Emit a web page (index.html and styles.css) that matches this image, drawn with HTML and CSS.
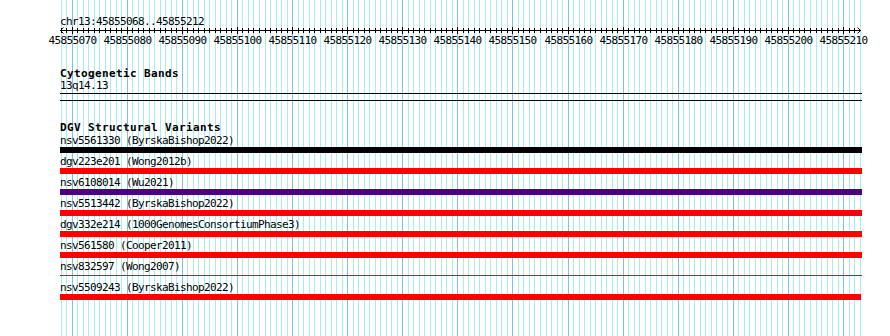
FILE: index.html
```html
<!DOCTYPE html>
<html>
<head>
<meta charset="utf-8">
<title>chr13:45855068..45855212</title>
<link rel="stylesheet" href="styles.css">
</head>
<body>
<div class="view">
  <div class="panel">
    <svg class="grid" width="802" height="336" viewBox="0 0 802 336">
      <path class="minor" d="M1.5 0v336M6.5 0v336M17.5 0v336M23.5 0v336M28.5 0v336M34.5 0v336M39.5 0v336M45.5 0v336M50.5 0v336M56.5 0v336M61.5 0v336M72.5 0v336M78.5 0v336M83.5 0v336M89.5 0v336M94.5 0v336M100.5 0v336M105.5 0v336M111.5 0v336M116.5 0v336M127.5 0v336M133.5 0v336M138.5 0v336M144.5 0v336M149.5 0v336M155.5 0v336M160.5 0v336M166.5 0v336M171.5 0v336M182.5 0v336M188.5 0v336M193.5 0v336M199.5 0v336M205.5 0v336M210.5 0v336M216.5 0v336M221.5 0v336M227.5 0v336M238.5 0v336M243.5 0v336M249.5 0v336M254.5 0v336M260.5 0v336M265.5 0v336M271.5 0v336M276.5 0v336M282.5 0v336M293.5 0v336M298.5 0v336M304.5 0v336M309.5 0v336M315.5 0v336M320.5 0v336M326.5 0v336M331.5 0v336M337.5 0v336M348.5 0v336M353.5 0v336M359.5 0v336M364.5 0v336M370.5 0v336M375.5 0v336M381.5 0v336M386.5 0v336M392.5 0v336M403.5 0v336M408.5 0v336M414.5 0v336M419.5 0v336M425.5 0v336M430.5 0v336M436.5 0v336M441.5 0v336M447.5 0v336M458.5 0v336M463.5 0v336M469.5 0v336M474.5 0v336M480.5 0v336M486.5 0v336M491.5 0v336M497.5 0v336M502.5 0v336M513.5 0v336M519.5 0v336M524.5 0v336M530.5 0v336M535.5 0v336M541.5 0v336M546.5 0v336M552.5 0v336M557.5 0v336M568.5 0v336M574.5 0v336M579.5 0v336M585.5 0v336M590.5 0v336M596.5 0v336M601.5 0v336M607.5 0v336M612.5 0v336M623.5 0v336M629.5 0v336M634.5 0v336M640.5 0v336M645.5 0v336M651.5 0v336M656.5 0v336M662.5 0v336M667.5 0v336M678.5 0v336M684.5 0v336M689.5 0v336M695.5 0v336M700.5 0v336M706.5 0v336M711.5 0v336M717.5 0v336M722.5 0v336M733.5 0v336M739.5 0v336M744.5 0v336M750.5 0v336M756.5 0v336M761.5 0v336M767.5 0v336M772.5 0v336M778.5 0v336M789.5 0v336M794.5 0v336M800.5 0v336"/>
      <path class="major" d="M12.5 0v336M67.5 0v336M122.5 0v336M177.5 0v336M232.5 0v336M287.5 0v336M342.5 0v336M397.5 0v336M452.5 0v336M508.5 0v336M563.5 0v336M618.5 0v336M673.5 0v336M728.5 0v336M783.5 0v336"/>
    </svg>
    <div class="tracks">
      <div class="pos">chr13:45855068..45855212</div>
      <svg class="ruler" width="802" height="22" viewBox="0 0 802 22">
        <path class="axis" d="M0 4.5H801"/>
        <path class="arrow" d="M3.5 1.5L0.5 4.5L3.5 7.5M797.5 1.5L800.5 4.5L797.5 7.5"/>
        <path class="tick" d="M1.5 2v5M6.5 2v5M17.5 2v5M23.5 2v5M28.5 2v5M34.5 2v5M39.5 2v5M45.5 2v5M50.5 2v5M56.5 2v5M61.5 2v5M72.5 2v5M78.5 2v5M83.5 2v5M89.5 2v5M94.5 2v5M100.5 2v5M105.5 2v5M111.5 2v5M116.5 2v5M127.5 2v5M133.5 2v5M138.5 2v5M144.5 2v5M149.5 2v5M155.5 2v5M160.5 2v5M166.5 2v5M171.5 2v5M182.5 2v5M188.5 2v5M193.5 2v5M199.5 2v5M205.5 2v5M210.5 2v5M216.5 2v5M221.5 2v5M227.5 2v5M238.5 2v5M243.5 2v5M249.5 2v5M254.5 2v5M260.5 2v5M265.5 2v5M271.5 2v5M276.5 2v5M282.5 2v5M293.5 2v5M298.5 2v5M304.5 2v5M309.5 2v5M315.5 2v5M320.5 2v5M326.5 2v5M331.5 2v5M337.5 2v5M348.5 2v5M353.5 2v5M359.5 2v5M364.5 2v5M370.5 2v5M375.5 2v5M381.5 2v5M386.5 2v5M392.5 2v5M403.5 2v5M408.5 2v5M414.5 2v5M419.5 2v5M425.5 2v5M430.5 2v5M436.5 2v5M441.5 2v5M447.5 2v5M458.5 2v5M463.5 2v5M469.5 2v5M474.5 2v5M480.5 2v5M486.5 2v5M491.5 2v5M497.5 2v5M502.5 2v5M513.5 2v5M519.5 2v5M524.5 2v5M530.5 2v5M535.5 2v5M541.5 2v5M546.5 2v5M552.5 2v5M557.5 2v5M568.5 2v5M574.5 2v5M579.5 2v5M585.5 2v5M590.5 2v5M596.5 2v5M601.5 2v5M607.5 2v5M612.5 2v5M623.5 2v5M629.5 2v5M634.5 2v5M640.5 2v5M645.5 2v5M651.5 2v5M656.5 2v5M662.5 2v5M667.5 2v5M678.5 2v5M684.5 2v5M689.5 2v5M695.5 2v5M700.5 2v5M706.5 2v5M711.5 2v5M717.5 2v5M722.5 2v5M733.5 2v5M739.5 2v5M744.5 2v5M750.5 2v5M756.5 2v5M761.5 2v5M767.5 2v5M772.5 2v5M778.5 2v5M789.5 2v5M794.5 2v5"/>
        <path class="tick" d="M12.5 1v7M67.5 1v7M122.5 1v7M177.5 1v7M232.5 1v7M287.5 1v7M342.5 1v7M397.5 1v7M452.5 1v7M508.5 1v7M563.5 1v7M618.5 1v7M673.5 1v7M728.5 1v7M783.5 1v7"/>
        <g class="scale">
          <text x="12.5" y="18">45855070</text>
          <text x="67.5" y="18">45855080</text>
          <text x="122.5" y="18">45855090</text>
          <text x="177.5" y="18">45855100</text>
          <text x="232.5" y="18">45855110</text>
          <text x="287.5" y="18">45855120</text>
          <text x="342.5" y="18">45855130</text>
          <text x="397.5" y="18">45855140</text>
          <text x="452.5" y="18">45855150</text>
          <text x="508.5" y="18">45855160</text>
          <text x="563.5" y="18">45855170</text>
          <text x="618.5" y="18">45855180</text>
          <text x="673.5" y="18">45855190</text>
          <text x="728.5" y="18">45855200</text>
          <text x="783.5" y="18">45855210</text>
        </g>
      </svg>

      <section class="track cyto">
        <div class="title">Cytogenetic Bands</div>
        <div class="label">13q14.13</div>
        <div class="band"></div>
      </section>

      <section class="track dgv">
        <div class="title">DGV Structural Variants</div>
        <div class="feature">
          <div class="label">nsv5561330 (ByrskaBishop2022)</div>
          <div class="bar black"></div>
        </div>
        <div class="feature">
          <div class="label">dgv223e201 (Wong2012b)</div>
          <div class="bar red"></div>
        </div>
        <div class="feature">
          <div class="label">nsv6108014 (Wu2021)</div>
          <div class="bar indigo"></div>
        </div>
        <div class="feature">
          <div class="label">nsv5513442 (ByrskaBishop2022)</div>
          <div class="bar red"></div>
        </div>
        <div class="feature">
          <div class="label">dgv332e214 (1000GenomesConsortiumPhase3)</div>
          <div class="bar red"></div>
        </div>
        <div class="feature">
          <div class="label">nsv561580 (Cooper2011)</div>
          <div class="bar red"></div>
        </div>
        <div class="feature">
          <div class="label">nsv832597 (Wong2007)</div>
          <div class="bar red thin"></div>
        </div>
        <div class="feature">
          <div class="label">nsv5509243 (ByrskaBishop2022)</div>
          <div class="bar red" style="width:801px"></div>
        </div>
      </section>
    </div>
  </div>
</div>
</body>
</html>
```

FILE: styles.css
```css
html, body {
  margin: 0;
  padding: 0;
  background: #ffffff;
}

body {
  width: 890px;
  height: 336px;
  overflow: hidden;
  font-family: "DejaVu Sans Mono", "Liberation Mono", monospace;
  font-size: 11px;
  letter-spacing: -0.62px;
  color: #000000;
}

.view {
  display: flex;
  padding-left: 60px;
}

.panel {
  display: grid;
  width: 802px;
  height: 336px;
}

.grid,
.tracks {
  grid-area: 1 / 1;
}

.grid {
  display: block;
  width: 802px;
  height: 336px;
  shape-rendering: crispEdges;
}

.grid path {
  fill: none;
  stroke-width: 1;
}

.grid .minor {
  stroke: #aaecf0;
}

.grid .major {
  stroke: #80c0e8;
}

.tracks {
  display: flex;
  flex-direction: column;
  padding-top: 18px;
  min-width: 0;
}

.pos {
  height: 8px;
  line-height: 8px;
  white-space: nowrap;
}

.ruler {
  display: block;
  width: 802px;
  height: 22px;
  overflow: visible;
}

.ruler .axis,
.ruler .tick {
  fill: none;
  stroke: #000000;
  stroke-width: 1;
  shape-rendering: crispEdges;
}

.ruler .arrow {
  fill: none;
  stroke: #000000;
  stroke-width: 1;
}

.ruler .scale text {
  font-family: "DejaVu Sans Mono", "Liberation Mono", monospace;
  font-size: 11px;
  letter-spacing: -0.62px;
  text-anchor: middle;
  fill: #000000;
}

.track {
  display: flex;
  flex-direction: column;
}

.cyto {
  margin-top: 20px;
}

.dgv {
  margin-top: 21px;
}

.title {
  height: 12px;
  line-height: 12px;
  font-weight: bold;
  letter-spacing: 0.38px;
  white-space: nowrap;
}

.dgv .title {
  margin-bottom: 1px;
}

.label {
  height: 12px;
  line-height: 12px;
  white-space: nowrap;
}

.band {
  margin-top: 1px;
  height: 6px;
  border-top: 1px solid #000000;
  border-bottom: 1px solid #000000;
}

.feature {
  display: flex;
  flex-direction: column;
}

.bar {
  width: 802px;
  height: 6px;
  margin-bottom: 3px;
}

.bar.black {
  background: #000000;
}

.bar.red {
  background: #ff0000;
}

.bar.indigo {
  background: #4b0082;
}

.bar.thin {
  height: 1px;
  margin-top: 2px;
  margin-bottom: 6px;
}
```
